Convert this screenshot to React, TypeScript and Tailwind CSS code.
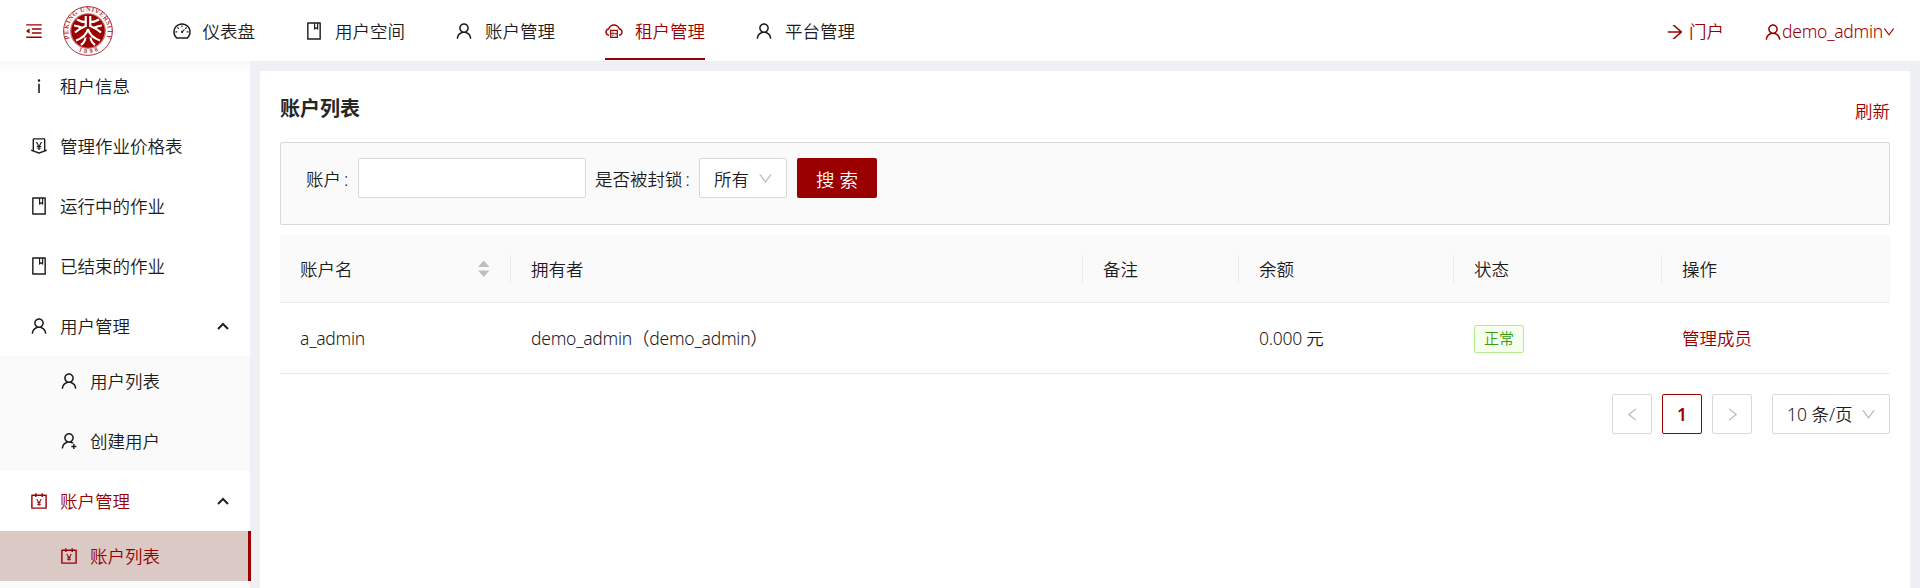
import type { ReactNode } from "react";
import type { IconType } from "react-icons";
import {
  AiFillCaretDown,
  AiFillCaretUp,
  AiOutlineAccountBook,
  AiOutlineArrowRight,
  AiOutlineBook,
  AiOutlineCloudServer,
  AiOutlineDashboard,
  AiOutlineDown,
  AiOutlineInfo,
  AiOutlineLeft,
  AiOutlineMenuFold,
  AiOutlineMoneyCollect,
  AiOutlineRight,
  AiOutlineUser,
  AiOutlineUserAdd,
} from "react-icons/ai";

function Logo() {
  return (
    <svg viewBox="0 0 100 100" className="size-[50px] shrink-0">
      <defs>
        <path id="ring-top" d="M50 50 m-35.6 17 a39.5 39.5 0 1 1 71.2 0" />
        <path id="ring-bottom" d="M19 82 A44.5 44.5 0 0 0 81 82" />
      </defs>
      <circle cx="50" cy="50" r="48.8" fill="#fff" stroke="#b03030" strokeWidth="2" />
      <circle cx="50" cy="50" r="34.5" fill="#9b0000" stroke="#c97070" strokeWidth="2.4" />
      <text fontFamily="Liberation Serif, serif" fontSize="13" fontWeight="700" fill="#b03a3a">
        <textPath href="#ring-top" startOffset="2" textLength="155">PEKING UNIVERSITY</textPath>
      </text>
      <text fontFamily="Liberation Serif, serif" fontSize="13" fontWeight="700" fill="#b03a3a">
        <textPath href="#ring-bottom" startOffset="14" textLength="42">1898</textPath>
      </text>
      <g fill="none" stroke="#fff" strokeWidth="4.4">
        <path d="M45.5 20v20Q35 44 24 53" />
        <path d="M54.5 20v20Q65 44 76 53" />
        <path d="M28 27q8 5 18 5M22 39q8 1 15 4" />
        <path d="M72 27q-8 5-18 5M78 39q-8 1-15 4" />
        <path d="M26 69Q46 62 50 46Q54 62 74 69" />
        <path d="M36 78Q44 72 45 63M64 78Q56 72 55 63" />
      </g>
    </svg>
  );
}

function NavItem({ icon: Icon, label, active }: { icon: IconType; label: string; active?: boolean }) {
  return (
    <div className="h-[61px] px-[25px]">
      <div
        className={`flex h-[60px] items-center gap-[11px] border-b-[2.5px] pt-[3px] ${
          active ? "border-[#9b0000] text-[#9b0000]" : "border-transparent"
        }`}
      >
        <Icon className="-ml-px size-[20px]" />
        <span className="pt-[3px]">{label}</span>
      </div>
    </div>
  );
}

type SideProps = { icon: IconType; label: string; nested?: boolean; open?: boolean; red?: boolean; selected?: boolean };

function SideItem({ icon: Icon, label, nested, open, red, selected }: SideProps) {
  return (
    <div
      className={`flex h-[50px] shrink-0 items-center gap-[11px] ${nested ? "pl-[59px]" : "pl-[29px]"} ${
        red || selected ? "text-[#9b0000]" : ""
      } ${selected ? "w-[251px] border-r-[3px] border-[#9b0000] bg-[#dac9c5]" : "w-[250px]"}`}
    >
      <Icon className="size-[20px]" />
      <span className="flex-1 pt-0.5">{label}</span>
      {open && (
        <svg viewBox="0 0 12 8" className="mr-[21px] h-[8px] w-[12px] text-[#222]">
          <path d="M1 7 6 2 11 7" fill="none" stroke="currentColor" strokeWidth="2" />
        </svg>
      )}
    </div>
  );
}

function HeadCell({ children, last }: { children: ReactNode; last?: boolean }) {
  return (
    <div className="flex h-full items-center">
      <div className="flex flex-1 items-center justify-between px-5 pt-0.5">{children}</div>
      {!last && <div className="h-7 w-px bg-[#ebebeb]" />}
    </div>
  );
}

const columns = "grid grid-cols-[231px_572px_156px_215px_208px_228px]";

export default function App() {
  return (
    <div className="flex h-[588px] w-[1920px] flex-col overflow-hidden bg-[#eff0f4] font-['Noto_Sans','Noto_Sans_CJK_SC',sans-serif] text-[17.5px] leading-[27.5px] font-[350] text-[#1c1c1c]">
      <header className="z-10 flex h-[61px] shrink-0 items-center bg-white">
        <AiOutlineMenuFold className="ml-[24px] size-[20px] text-[#9b0000]" />
        <div className="ml-[19px] flex w-[84.5px]">
          <Logo />
        </div>
        <nav className="flex">
          <NavItem icon={AiOutlineDashboard} label="仪表盘" />
          <NavItem icon={AiOutlineBook} label="用户空间" />
          <NavItem icon={AiOutlineUser} label="账户管理" />
          <NavItem icon={AiOutlineCloudServer} label="租户管理" active />
          <NavItem icon={AiOutlineUser} label="平台管理" />
        </nav>
        <div className="ml-auto flex items-center pt-[2px] pr-[24px] text-[#9b0000]">
          <AiOutlineArrowRight className="mr-[4px] size-[20px]" />
          <span className="mr-[39px] pt-px">门户</span>
          <AiOutlineUser className="-mr-[1px] size-[20px]" />
          <span className="w-[100px] pt-px tracking-[-0.24px]">demo_admin</span>
          <AiOutlineDown className="size-[14px]" />
        </div>
      </header>

      <div className="flex flex-1">
        <aside className="z-1 flex h-[527px] w-[250px] shrink-0 flex-col bg-white bg-linear-to-b from-[#f8f8f8] to-white to-[11px]">
          <div className="flex flex-col gap-[10px] pb-[5px]">
            <SideItem icon={AiOutlineInfo} label="租户信息" />
            <SideItem icon={AiOutlineMoneyCollect} label="管理作业价格表" />
            <SideItem icon={AiOutlineBook} label="运行中的作业" />
            <SideItem icon={AiOutlineBook} label="已结束的作业" />
            <SideItem icon={AiOutlineUser} label="用户管理" open />
          </div>
          <div className="flex flex-col gap-[10px] bg-[#fafafa] pb-[5px]">
            <SideItem icon={AiOutlineUser} label="用户列表" nested />
            <SideItem icon={AiOutlineUserAdd} label="创建用户" nested />
          </div>
          <div className="py-[5px]">
            <SideItem icon={AiOutlineAccountBook} label="账户管理" open red />
          </div>
          <div className="flex-1 bg-[#fafafa]">
            <SideItem icon={AiOutlineAccountBook} label="账户列表" nested selected />
          </div>
        </aside>

        <main className="mt-[10px] ml-[10px] h-[517px] w-[1650px] bg-white px-5 pt-5">
          <div className="flex h-[51px] justify-between">
            <h1 className="pt-[4px] text-[20px] leading-[28px] font-bold text-[#262626]">账户列表</h1>
            <a className="pt-[7px] text-[#9b0000]">刷新</a>
          </div>

          <div className="flex h-[83px] items-start rounded-[2px] border border-[#d9d9d9] bg-[#fafafa] pt-[15px] pl-[25px]">
            <label className="flex h-10 w-[52px] items-center pt-1">账户<span className="ml-[3px]">:</span></label>
            <input className="h-10 w-[228px] rounded-[2px] border border-[#d9d9d9] bg-white px-3" />
            <label className="ml-[9px] flex h-10 w-[104px] items-center pt-1">是否被封锁<span className="ml-[3px]">:</span></label>
            <div className="flex h-10 w-[88px] items-center justify-between rounded-[2px] border border-[#d9d9d9] bg-white pr-[12px] pl-[14px]">
              <span className="pt-1">所有</span>
              <AiOutlineDown className="size-[17px] text-[#bfbfbf]" />
            </div>
            <button className="ml-[10px] flex h-10 w-[80px] items-center justify-center rounded-[2px] bg-[#9b0000] pt-1 text-[18.5px] text-white">
              搜 索
            </button>
          </div>

          <section className="mt-[10px]">
            <div className={`${columns} h-[68px] rounded-t-[2px] border-b border-[#ebebeb] bg-[#fafafa]`}>
              <HeadCell>
                <span>账户名</span>
                <span className="-mr-px -mt-0.5 flex flex-col items-center text-[#bfbfbf]">
                  <AiFillCaretUp className="-mb-[3px] size-[15.5px]" />
                  <AiFillCaretDown className="-mt-[3px] size-[15.5px]" />
                </span>
              </HeadCell>
              <HeadCell>拥有者</HeadCell>
              <HeadCell>备注</HeadCell>
              <HeadCell>余额</HeadCell>
              <HeadCell>状态</HeadCell>
              <HeadCell last>操作</HeadCell>
            </div>
            <div className={`${columns} h-[71px] items-center border-b border-[#ebebeb] pt-0.5`}>
              <span className="px-5 tracking-[-0.24px]">a_admin</span>
              <span className="px-5 tracking-[-0.24px]">demo_admin（demo_admin）</span>
              <span className="px-5" />
              <span className="px-5 tracking-[-0.24px]">0.000 元</span>
              <span className="px-5">
                <span className="flex h-7 w-[50px] items-center justify-center rounded-[2px] border border-[#b7eb8f] bg-[#f6ffed] text-[15px] text-[#389e0d]">
                  正常
                </span>
              </span>
              <a className="px-5 text-[#9b0000]">管理成员</a>
            </div>
          </section>

          <div className="mt-5 flex justify-end gap-[10px]">
            <div className="flex size-10 items-center justify-center rounded-[2px] border border-[#d9d9d9] text-[#bfbfbf]">
              <AiOutlineLeft className="size-[17px]" />
            </div>
            <div className="flex size-10 items-center justify-center rounded-[2px] border border-[#9b0000] pt-px font-semibold text-[#9b0000]">
              1
            </div>
            <div className="flex size-10 items-center justify-center rounded-[2px] border border-[#d9d9d9] text-[#bfbfbf]">
              <AiOutlineRight className="size-[17px]" />
            </div>
            <div className="ml-[10px] flex h-10 w-[118px] items-center justify-between rounded-[2px] border border-[#d9d9d9] pr-[12px] pl-[14px]">
              <span className="pt-px">10 条/页</span>
              <AiOutlineDown className="size-[17px] text-[#bfbfbf]" />
            </div>
          </div>
        </main>
      </div>
    </div>
  );
}
